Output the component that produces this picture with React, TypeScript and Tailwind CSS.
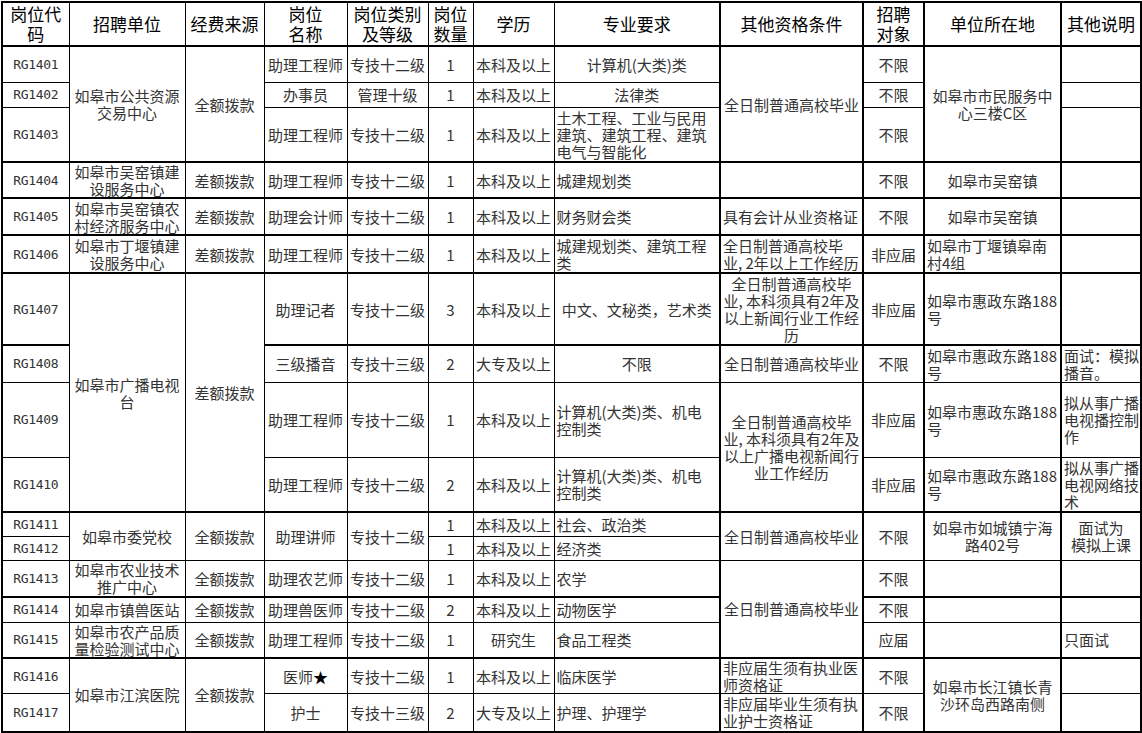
import React from 'react';

const font = { fontFamily: '"Noto Sans CJK SC", "Noto Sans", sans-serif' };

// base cell styles
const c = "border border-black p-0 align-middle text-center text-[15px] leading-[17px] text-[#333] font-normal whitespace-nowrap overflow-hidden";
const l = "border border-black p-0 pl-[2px] align-middle text-left text-[15px] leading-[17px] text-[#333] font-normal whitespace-nowrap overflow-hidden";
const code = "border border-black p-0 align-middle text-center text-[13px] leading-[17px] tracking-[-0.3px] text-[#333] font-['DejaVu_Sans_Mono',monospace]";
const th = "border border-black border-b-2 p-0 align-middle text-center text-[17px] leading-[20px] text-black font-normal";
const T = " border-t-2";
const R = " border-l-2";

export default function App() {
  return (
    <div className="bg-white w-[1142px] h-[733px] pt-[1px] pl-[1px]" style={font}>
      <table className="table-fixed border-collapse border-2 border-black w-[1139px]">
        <colgroup>
          <col className="w-[67px]" />
          <col className="w-[116px]" />
          <col className="w-[79px]" />
          <col className="w-[83px]" />
          <col className="w-[81px]" />
          <col className="w-[45px]" />
          <col className="w-[81px]" />
          <col className="w-[166px]" />
          <col className="w-[143px]" />
          <col className="w-[61px]" />
          <col className="w-[137px]" />
          <col className="w-[80px]" />
        </colgroup>
        <thead>
          <tr className="h-[44px]">
            <th className={th}>岗位代<br />码</th>
            <th className={th}>招聘单位</th>
            <th className={th}>经费来源</th>
            <th className={th}>岗位<br />名称</th>
            <th className={th}>岗位类别<br />及等级</th>
            <th className={th}>岗位<br />数量</th>
            <th className={th}>学历</th>
            <th className={th}>专业要求</th>
            <th className={th + R}>其他资格条件</th>
            <th className={th + R}>招聘<br />对象</th>
            <th className={th + R}>单位所在地</th>
            <th className={th + R + " text-[#444]"}>其他说明</th>
          </tr>
        </thead>
        <tbody>
          <tr className="h-[36px]">
            <td className={code}>RG1401</td>
            <td className={c} rowSpan={3}>如皋市公共资源<br />交易中心</td>
            <td className={c} rowSpan={3}>全额拨款</td>
            <td className={c}>助理工程师</td>
            <td className={c}>专技十二级</td>
            <td className={c}>1</td>
            <td className={c}>本科及以上</td>
            <td className={c}>计算机(大类)类</td>
            <td className={c + R} rowSpan={3}>全日制普通高校毕业</td>
            <td className={c + R}>不限</td>
            <td className={c + R} rowSpan={3}>如皋市市民服务中<br />心三楼C区</td>
            <td className={c + R}></td>
          </tr>
          <tr className="h-[25px]">
            <td className={code}>RG1402</td>
            <td className={c}>办事员</td>
            <td className={c}>管理十级</td>
            <td className={c}>1</td>
            <td className={c}>本科及以上</td>
            <td className={c}>法律类</td>
            <td className={c + R}>不限</td>
            <td className={c + R}></td>
          </tr>
          <tr className="h-[55px]">
            <td className={code}>RG1403</td>
            <td className={c}>助理工程师</td>
            <td className={c}>专技十二级</td>
            <td className={c}>1</td>
            <td className={c}>本科及以上</td>
            <td className={l}>土木工程、工业与民用<br />建筑、建筑工程、建筑<br />电气与智能化</td>
            <td className={c + R}>不限</td>
            <td className={c + R}></td>
          </tr>
          <tr className="h-[36px]">
            <td className={code + T}>RG1404</td>
            <td className={c + T}>如皋市吴窑镇建<br />设服务中心</td>
            <td className={c + T}>差额拨款</td>
            <td className={c + T}>助理工程师</td>
            <td className={c + T}>专技十二级</td>
            <td className={c + T}>1</td>
            <td className={c + T}>本科及以上</td>
            <td className={l + T}>城建规划类</td>
            <td className={c + T + R}></td>
            <td className={c + T + R}>不限</td>
            <td className={c + T + R}>如皋市吴窑镇</td>
            <td className={c + T + R}></td>
          </tr>
          <tr className="h-[37px]">
            <td className={code + T}>RG1405</td>
            <td className={c + T}>如皋市吴窑镇农<br />村经济服务中心</td>
            <td className={c + T}>差额拨款</td>
            <td className={c + T}>助理会计师</td>
            <td className={c + T}>专技十二级</td>
            <td className={c + T}>1</td>
            <td className={c + T}>本科及以上</td>
            <td className={l + T}>财务财会类</td>
            <td className={l + T + R}>具有会计从业资格证</td>
            <td className={c + T + R}>不限</td>
            <td className={c + T + R}>如皋市吴窑镇</td>
            <td className={c + T + R}></td>
          </tr>
          <tr className="h-[38px]">
            <td className={code + T}>RG1406</td>
            <td className={c + T}>如皋市丁堰镇建<br />设服务中心</td>
            <td className={c + T}>差额拨款</td>
            <td className={c + T}>助理工程师</td>
            <td className={c + T}>专技十二级</td>
            <td className={c + T}>1</td>
            <td className={c + T}>本科及以上</td>
            <td className={l + T}>城建规划类、建筑工程<br />类</td>
            <td className={l + T + R}>全日制普通高校毕<br />业, 2年以上工作经历</td>
            <td className={c + T + R}>非应届</td>
            <td className={l + T + R}>如皋市丁堰镇皋南<br />村4组</td>
            <td className={c + T + R}></td>
          </tr>
          <tr className="h-[72px]">
            <td className={code + T}>RG1407</td>
            <td className={c + T} rowSpan={4}>如皋市广播电视<br />台</td>
            <td className={c + T} rowSpan={4}>差额拨款</td>
            <td className={c + T}>助理记者</td>
            <td className={c + T}>专技十二级</td>
            <td className={c + T}>3</td>
            <td className={c + T}>本科及以上</td>
            <td className={c + T}>中文、文秘类，艺术类</td>
            <td className={c + T + R}>全日制普通高校毕<br />业, 本科须具有2年及<br />以上新闻行业工作经<br />历</td>
            <td className={c + T + R}>非应届</td>
            <td className={l + T + R}>如皋市惠政东路188<br />号</td>
            <td className={c + T + R}></td>
          </tr>
          <tr className="h-[37px]">
            <td className={code + T}>RG1408</td>
            <td className={c + T}>三级播音</td>
            <td className={c + T}>专技十三级</td>
            <td className={c + T}>2</td>
            <td className={c + T}>大专及以上</td>
            <td className={c + T}>不限</td>
            <td className={c + T + R}>全日制普通高校毕业</td>
            <td className={c + T + R}>不限</td>
            <td className={l + T + R}>如皋市惠政东路188<br />号</td>
            <td className={l + T + R}>面试：模拟<br />播音。</td>
          </tr>
          <tr className="h-[75px]">
            <td className={code}>RG1409</td>
            <td className={c}>助理工程师</td>
            <td className={c}>专技十二级</td>
            <td className={c}>1</td>
            <td className={c}>本科及以上</td>
            <td className={l}>计算机(大类)类、机电<br />控制类</td>
            <td className={c + R} rowSpan={2}>全日制普通高校毕<br />业, 本科须具有2年及<br />以上广播电视新闻行<br />业工作经历</td>
            <td className={c + R}>非应届</td>
            <td className={l + R}>如皋市惠政东路188<br />号</td>
            <td className={l + R}>拟从事广播<br />电视播控制<br />作</td>
          </tr>
          <tr className="h-[55px]">
            <td className={code}>RG1410</td>
            <td className={c}>助理工程师</td>
            <td className={c}>专技十二级</td>
            <td className={c}>2</td>
            <td className={c}>本科及以上</td>
            <td className={l}>计算机(大类)类、机电<br />控制类</td>
            <td className={c + R}>非应届</td>
            <td className={l + R}>如皋市惠政东路188<br />号</td>
            <td className={l + R}>拟从事广播<br />电视网络技<br />术</td>
          </tr>
          <tr className="h-[24px]">
            <td className={code + T}>RG1411</td>
            <td className={c + T} rowSpan={2}>如皋市委党校</td>
            <td className={c + T} rowSpan={2}>全额拨款</td>
            <td className={c + T} rowSpan={2}>助理讲师</td>
            <td className={c + T} rowSpan={2}>专技十二级</td>
            <td className={c + T}>1</td>
            <td className={c + T}>本科及以上</td>
            <td className={l + T}>社会、政治类</td>
            <td className={c + T + R} rowSpan={2}>全日制普通高校毕业</td>
            <td className={c + T + R} rowSpan={2}>不限</td>
            <td className={c + T + R} rowSpan={2}>如皋市如城镇宁海<br />路402号</td>
            <td className={c + T + R} rowSpan={2}>面试为<br />模拟上课</td>
          </tr>
          <tr className="h-[24px]">
            <td className={code}>RG1412</td>
            <td className={c}>1</td>
            <td className={c}>本科及以上</td>
            <td className={l}>经济类</td>
          </tr>
          <tr className="h-[37px]">
            <td className={code}>RG1413</td>
            <td className={c}>如皋市农业技术<br />推广中心</td>
            <td className={c}>全额拨款</td>
            <td className={c}>助理农艺师</td>
            <td className={c}>专技十二级</td>
            <td className={c}>1</td>
            <td className={c}>本科及以上</td>
            <td className={l}>农学</td>
            <td className={c + R} rowSpan={3}>全日制普通高校毕业</td>
            <td className={c + R}>不限</td>
            <td className={c + R}></td>
            <td className={c + R}></td>
          </tr>
          <tr className="h-[25px]">
            <td className={code + T}>RG1414</td>
            <td className={c + T}>如皋市镇兽医站</td>
            <td className={c + T}>全额拨款</td>
            <td className={c + T}>助理兽医师</td>
            <td className={c + T}>专技十二级</td>
            <td className={c + T}>2</td>
            <td className={c + T}>本科及以上</td>
            <td className={l + T}>动物医学</td>
            <td className={c + T + R}>不限</td>
            <td className={c + T + R}></td>
            <td className={c + T + R}></td>
          </tr>
          <tr className="h-[36px]">
            <td className={code}>RG1415</td>
            <td className={c}>如皋市农产品质<br />量检验测试中心</td>
            <td className={c}>全额拨款</td>
            <td className={c}>助理工程师</td>
            <td className={c}>专技十二级</td>
            <td className={c}>1</td>
            <td className={c}>研究生</td>
            <td className={l}>食品工程类</td>
            <td className={c + R}>应届</td>
            <td className={c + R}></td>
            <td className={l + R}>只面试</td>
          </tr>
          <tr className="h-[35px]">
            <td className={code + T}>RG1416</td>
            <td className={c + T} rowSpan={2}>如皋市江滨医院</td>
            <td className={c + T} rowSpan={2}>全额拨款</td>
            <td className={c + T}>医师<span className="text-black">★</span></td>
            <td className={c + T}>专技十二级</td>
            <td className={c + T}>1</td>
            <td className={c + T}>本科及以上</td>
            <td className={l + T}>临床医学</td>
            <td className={l + T + R}>非应届生须有执业医<br />师资格证</td>
            <td className={c + T + R}>不限</td>
            <td className={c + T + R} rowSpan={2}>如皋市长江镇长青<br />沙环岛西路南侧</td>
            <td className={c + T + R}></td>
          </tr>
          <tr className="h-[38px]">
            <td className={code}>RG1417</td>
            <td className={c}>护士</td>
            <td className={c}>专技十三级</td>
            <td className={c}>2</td>
            <td className={c}>大专及以上</td>
            <td className={l}>护理、护理学</td>
            <td className={l + R}>非应届毕业生须有执<br />业护士资格证</td>
            <td className={c + R}>不限</td>
            <td className={c + R}></td>
          </tr>
        </tbody>
      </table>
    </div>
  );
}
